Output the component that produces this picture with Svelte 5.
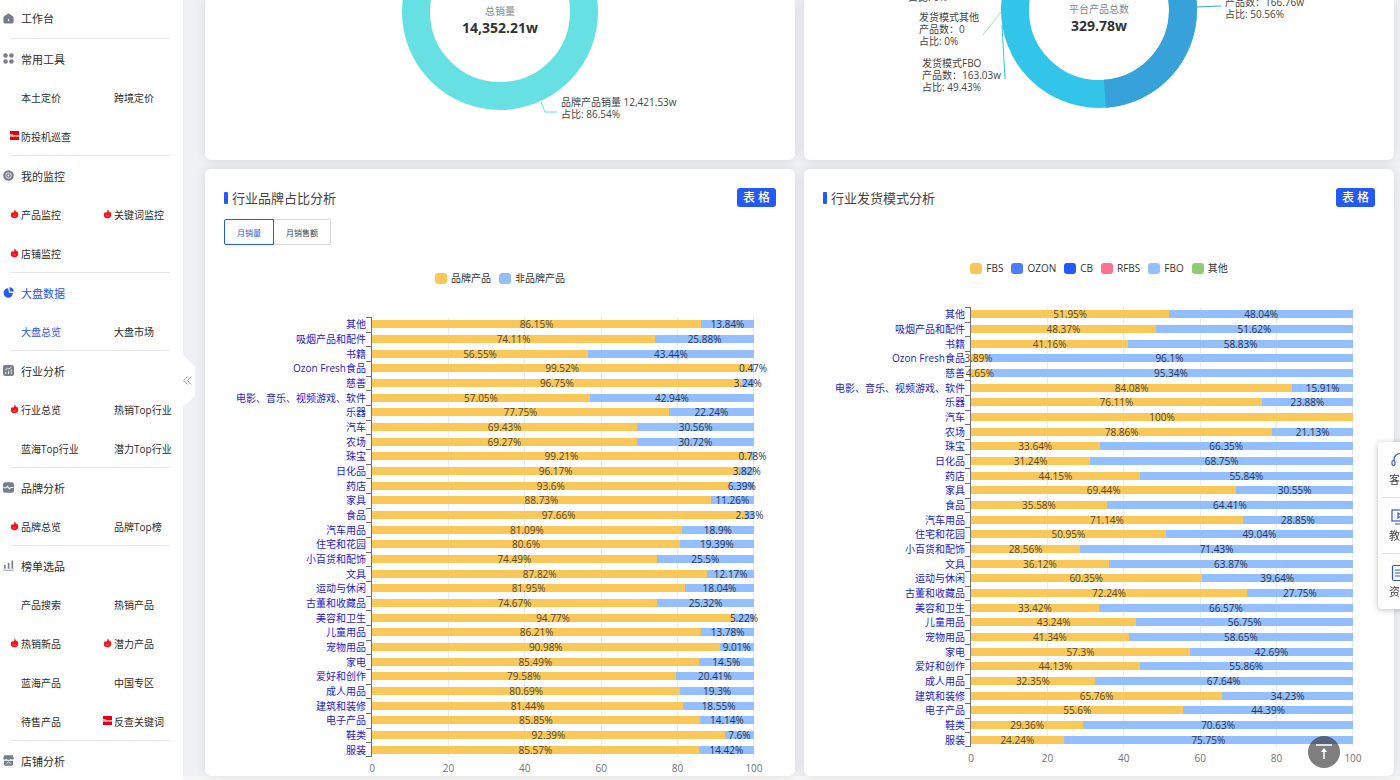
<script lang="ts">
  const menu = [
    {
      title: "常用工具",
      icon: "grid",
      items: [{ name: "本土定价" }, { name: "跨境定价" }, { name: "防投机巡查", tag: "new" }],
    },
    {
      title: "我的监控",
      icon: "target",
      items: [
        { name: "产品监控", tag: "hot" },
        { name: "关键词监控", tag: "hot" },
        { name: "店铺监控", tag: "hot" },
      ],
    },
    {
      title: "大盘数据",
      icon: "pie",
      active: true,
      items: [{ name: "大盘总览", active: true }, { name: "大盘市场" }],
    },
    {
      title: "行业分析",
      icon: "trend",
      items: [
        { name: "行业总览", tag: "hot" },
        { name: "热销Top行业" },
        { name: "蓝海Top行业" },
        { name: "潜力Top行业" },
      ],
    },
    {
      title: "品牌分析",
      icon: "pulse",
      items: [{ name: "品牌总览", tag: "hot" }, { name: "品牌Top榜" }],
    },
    {
      title: "榜单选品",
      icon: "bars",
      items: [
        { name: "产品搜索" },
        { name: "热销产品" },
        { name: "热销新品", tag: "hot" },
        { name: "潜力产品", tag: "hot" },
        { name: "蓝海产品" },
        { name: "中国专区" },
        { name: "待售产品" },
        { name: "反查关键词", tag: "new" },
      ],
    },
    { title: "店铺分析", icon: "shop", items: [] },
  ];

  const categories = [
    "其他", "吸烟产品和配件", "书籍", "Ozon Fresh食品", "慈善",
    "电影、音乐、视频游戏、软件", "乐器", "汽车", "农场", "珠宝",
    "日化品", "药店", "家具", "食品", "汽车用品",
    "住宅和花园", "小百货和配饰", "文具", "运动与休闲", "古董和收藏品",
    "美容和卫生", "儿童用品", "宠物用品", "家电", "爱好和创作",
    "成人用品", "建筑和装修", "电子产品", "鞋类", "服装",
  ];

  const brand = [
    [86.15, 13.84], [74.11, 25.88], [56.55, 43.44], [99.52, 0.47], [96.75, 3.24],
    [57.05, 42.94], [77.75, 22.24], [69.43, 30.56], [69.27, 30.72], [99.21, 0.78],
    [96.17, 3.82], [93.6, 6.39], [88.73, 11.26], [97.66, 2.33], [81.09, 18.9],
    [80.6, 19.39], [74.49, 25.5], [87.82, 12.17], [81.95, 18.04], [74.67, 25.32],
    [94.77, 5.22], [86.21, 13.78], [90.98, 9.01], [85.49, 14.5], [79.58, 20.41],
    [80.69, 19.3], [81.44, 18.55], [85.85, 14.14], [92.39, 7.6], [85.57, 14.42],
  ];

  const delivery = [
    [51.95, 48.04], [48.37, 51.62], [41.16, 58.83], [3.89, 96.1], [4.65, 95.34],
    [84.08, 15.91], [76.11, 23.88], [100], [78.86, 21.13], [33.64, 66.35],
    [31.24, 68.75], [44.15, 55.84], [69.44, 30.55], [35.58, 64.41], [71.14, 28.85],
    [50.95, 49.04], [28.56, 71.43], [36.12, 63.87], [60.35, 39.64], [72.24, 27.75],
    [33.42, 66.57], [43.24, 56.75], [41.34, 58.65], [57.3, 42.69], [44.13, 55.86],
    [32.35, 67.64], [65.76, 34.23], [55.6, 44.39], [29.36, 70.63], [24.24, 75.75],
  ];

  const brandLegend = [
    { name: "品牌产品", color: "#fac858" },
    { name: "非品牌产品", color: "#93beff" },
  ];

  const deliveryLegend = [
    { name: "FBS", color: "#fac858" },
    { name: "OZON", color: "#4e7bff" },
    { name: "CB", color: "#2459f5" },
    { name: "RFBS", color: "#fc7293" },
    { name: "FBO", color: "#93beff" },
    { name: "其他", color: "#91cc75" },
  ];

  const ticks = [0, 20, 40, 60, 80, 100];
  const tabs = ["月销量", "月销售额"];
  let tab = $state("月销量");
</script>

{#snippet menuIcon(name)}
  <svg class="icon" viewBox="0 0 12 12" aria-hidden="true">
    {#if name === "home"}
      <path d="M6 0.4 10.8 3.6Q11.6 4.2 11.6 5.2V9.6Q11.6 11.4 9.8 11.4H2.2Q0.4 11.4 0.4 9.6V5.2Q0.4 4.2 1.2 3.6Z" />
      <path d="M6 6.4V8.8" stroke="#fff" />
    {:else if name === "grid"}
      <circle cx="2.8" cy="2.8" r="2.5" />
      <circle cx="9.2" cy="2.8" r="2.5" />
      <circle cx="2.8" cy="9.2" r="2.5" />
      <circle cx="9.2" cy="9.2" r="2.5" />
    {:else if name === "target"}
      <circle cx="6" cy="6" r="5.8" />
      <circle cx="6" cy="6" r="3" fill="none" stroke="#fff" stroke-width="0.9" />
      <circle cx="6" cy="6" r="1" fill="#fff" />
    {:else if name === "pie"}
      <path d="M5.6 1.4A5.1 5.1 0 1 0 10.8 6.8L6.6 6.4Z" />
      <path d="M7 0.2A5 5 0 0 1 11.8 4.8L7.6 5Z" />
    {:else if name === "trend"}
      <rect width="12" height="12" rx="2.4" />
      <path d="M3 10V7.6M6 10V6.2M9 10V4.8M2.4 5.4 5 3.6 6.4 4.4 9.4 2" fill="none" stroke="#fff" stroke-width="0.9" />
    {:else if name === "pulse"}
      <rect y="0.4" width="12" height="11.2" rx="2.4" />
      <path d="M0.4 6.4H3.4L5 4.8 7 7.6 8.6 6H11.6" fill="none" stroke="#fff" stroke-width="1.1" />
    {:else if name === "bars"}
      <path d="M1.2 5.4H3V9.6H1.2ZM5.2 3H7V9.6H5.2ZM9.2 0.6H11V9.6H9.2ZM0.2 10.6H11.8V11.5H0.2Z" />
    {:else}
      <path d="M1.6 0.4H10.4L11.8 3.4Q11.8 5.2 10.2 5.2 9 5.2 8.6 4.2 8 5.4 6 5.4 4 5.4 3.4 4.2 3 5.2 1.8 5.2 0.2 5.2 0.2 3.4Z" />
      <path d="M1 6.2H11V10Q11 11.6 9.4 11.6H2.6Q1 11.6 1 10Z" />
      <path d="M3.6 9.6 6 7.6 8.4 9.6" fill="none" stroke="#fff" stroke-width="0.9" />
    {/if}
  </svg>
{/snippet}

{#snippet barChart(rows)}
  <div class="chart">
    <div class="rows">
      <div class="grid-lines">
        {#each ticks as t}
          <i></i>
        {/each}
      </div>
      {#each rows as row, i}
        <div class="row">
          <span class="category">{categories[i]}</span>
          <span class="tick"></span>
          <div class="track">
            {#each row as value}
              <div class="bar" style="width: {value}%"><span>{value}%</span></div>
            {/each}
          </div>
        </div>
      {/each}
    </div>
    <div class="axis">
      {#each ticks as t}
        <span>{t}</span>
      {/each}
    </div>
  </div>
{/snippet}

{#snippet legend(entries)}
  <ul class="legend">
    {#each entries as entry}
      <li><i style="background: {entry.color}"></i>{entry.name}</li>
    {/each}
  </ul>
{/snippet}

<div class="page">
  <nav class="sidebar">
    <a class="heading home" href="#home">{@render menuIcon("home")}工作台</a>
    {#each menu as group}
      <section class="group">
        <a class="heading" class:active={group.active} href="#group">
          {@render menuIcon(group.icon)}{group.title}
        </a>
        <div class="items">
          {#each group.items as item}
            <a class="item" class:active={item.active} href="#item">
              <span class="tag">
                {#if item.tag === "hot"}
                  <svg width="9" height="10" viewBox="0 0 9 10" aria-hidden="true">
                    <path d="M4.6 0.4Q6.2 1.6 6 3.2 6.8 3 7 2.2 8.6 4 8.2 6.4 7.6 9.2 4.4 9.2 1.2 9 0.8 6.4 0.6 4.4 2.2 2.8 2.4 3.8 3 3.8 4.6 2.8 4.6 0.4Z" fill="#f5141c" />
                    <path d="M3 6.6Q4.4 7.6 6 6.6" fill="none" stroke="#ff9a9a" stroke-width="0.6" />
                  </svg>
                {:else if item.tag === "new"}
                  <b class="new">New</b>
                {/if}
              </span>{item.name}
            </a>
          {/each}
        </div>
      </section>
    {/each}
    <button class="collapse" aria-label="收起菜单">
      <svg width="9" height="9" viewBox="0 0 9 9" aria-hidden="true">
        <path d="M4.5 0.5 0.8 4.5 4.5 8.5M8.2 0.5 4.5 4.5 8.2 8.5" fill="none" stroke="#777" stroke-width="0.8" />
      </svg>
    </button>
  </nav>

  <main>
    <section class="card donut">
      <svg width="590" height="160" viewBox="0 0 590 160">
        <circle cx="295" cy="12" r="84" fill="none" stroke="#67e0e3" stroke-width="28" />
        <text class="caption" x="295" y="15">总销量</text>
        <text class="total" x="295" y="33">14,352.21w</text>
        <path d="M336 102 340 112H352" fill="none" stroke="#67e0e3" />
        <text x="356" y="106">品牌产品销量 12,421.53w</text>
        <text x="356" y="118">占比: 86.54%</text>
      </svg>
    </section>

    <section class="card donut">
      <svg width="590" height="160" viewBox="0 0 590 160">
        <circle cx="295" cy="10" r="84" fill="none" stroke="#32c5e9" stroke-width="28" />
        <path d="M295-74A84 84 0 0 1 300.9 93.79" fill="none" stroke="#37a2da" stroke-width="28" />
        <text class="caption" x="295" y="13">平台产品总数</text>
        <text class="total" x="295" y="31">329.78w</text>
        <path d="M392 7 417 6" stroke="#37a2da" />
        <text x="421" y="6">产品数：166.76w</text>
        <text x="421" y="18">占比: 50.56%</text>
        <path d="M197 12 179 35" stroke="#9fe6b8" />
        <text x="104" y="1">占比: 0%</text>
        <text x="115" y="21">发货模式其他</text>
        <text x="115" y="33">产品数：0</text>
        <text x="115" y="45">占比: 0%</text>
        <path d="M198 25 201 79" stroke="#32c5e9" />
        <text x="118" y="67">发货模式FBO</text>
        <text x="118" y="79">产品数：163.03w</text>
        <text x="118" y="91">占比: 49.43%</text>
      </svg>
    </section>

    <section class="card">
      <header>
        <h2>行业品牌占比分析</h2>
        <button class="table-btn">表 格</button>
      </header>
      <div class="tabs">
        {#each tabs as name}
          <button class:selected={tab === name} onclick={() => (tab = name)}>{name}</button>
        {/each}
      </div>
      {@render legend(brandLegend)}
      {@render barChart(brand)}
    </section>

    <section class="card no-tabs">
      <header>
        <h2>行业发货模式分析</h2>
        <button class="table-btn">表 格</button>
      </header>
      {@render legend(deliveryLegend)}
      {@render barChart(delivery)}
    </section>
  </main>

  <aside class="float">
    <a href="#service">
      <svg width="18" height="18" viewBox="0 0 18 18" aria-hidden="true">
        <path d="M3 9V7.5A6 6 0 0 1 15 7.5V9M15 12Q14.6 15.6 10 15.8" />
        <rect x="1" y="8.5" width="3" height="5" rx="1.5" />
        <rect x="14" y="8.5" width="3" height="5" rx="1.5" />
      </svg>
      客服
    </a>
    <a href="#course">
      <svg width="18" height="18" viewBox="0 0 18 18" aria-hidden="true">
        <rect x="1" y="2" width="16" height="11" />
        <path d="M7 5V10L11 7.5ZM4 16H14" />
      </svg>
      教程
    </a>
    <a href="#docs">
      <svg width="18" height="18" viewBox="0 0 18 18" aria-hidden="true">
        <rect x="1.5" y="1.5" width="15" height="15" rx="1.5" />
        <path d="M4 6H14M4 9H14M4 12H14" />
      </svg>
      资料
    </a>
  </aside>

  <button class="to-top" aria-label="回到顶部">
    <svg width="16" height="16" viewBox="0 0 16 16" aria-hidden="true">
      <path d="M0 1H16M8 15V6" fill="none" stroke="#fff" stroke-width="1.5" />
      <path d="M8 4 11 8H5Z" fill="#fff" />
    </svg>
  </button>
</div>

<style>
  :global(body) {
    margin: 0;
    background: #f7f7f7;
  }
  .page {
    display: flex;
    align-items: flex-start;
    height: 100vh;
    overflow: hidden;
    font-family: "Open Sans", "Noto Sans CJK SC", sans-serif;
    font-size: 10px;
    color: #2c2c2c;
  }
  button {
    font-family: inherit;
    cursor: pointer;
  }
  a {
    color: inherit;
    text-decoration: none;
  }

  .sidebar {
    position: relative;
    flex: 0 0 183px;
    min-width: 0;
    height: 100vh;
    background: #fff;
  }
  .heading {
    display: flex;
    align-items: center;
    gap: 7px;
    height: 39px;
    margin-left: -7px;
    font-size: 11px;
    white-space: nowrap;
  }
  .home {
    height: 36px;
    margin: 0 0 2px 3px;
  }
  .icon {
    width: 11px;
    height: 11px;
    fill: #777d8d;
  }
  .active {
    color: #2b55e6;
  }
  .active .icon {
    fill: #2459f5;
  }
  .group {
    margin: 0 13px 0 10px;
    border-top: 1px solid #e4e6ea;
  }
  .items {
    display: grid;
    grid-template-columns: 93px minmax(0, 1fr);
    grid-auto-rows: 39px;
    margin-bottom: -1px;
  }
  .item {
    display: flex;
    align-items: center;
    white-space: nowrap;
  }
  .tag {
    flex: 0 0 11px;
    height: 12px;
  }
  .tag svg,
  .new {
    display: block;
  }
  .new {
    width: 9px;
    height: 9px;
    background: #e60012;
    color: #fff;
    font-size: 4px;
    line-height: 9px;
    text-align: center;
  }
  .collapse {
    position: absolute;
    top: 355px;
    left: 183px;
    z-index: 1;
    width: 12px;
    height: 52px;
    padding: 0 0 2px;
    border: 0;
    background: #fff;
    text-align: left;
    clip-path: polygon(0 0, 100% 22%, 100% 78%, 0 100%);
  }

  main {
    flex: 1;
    display: grid;
    grid-template-columns: 1fr 1fr;
    gap: 9px;
    padding: 0 6px 0 22px;
    background: #eff1f5;
  }
  .card {
    min-width: 0;
    background: #fff;
    border-radius: 6px;
    box-shadow: 0 0 12px rgba(0, 0, 0, 0.1);
    padding: 19px 19px 0;
  }
  .donut {
    display: flex;
    justify-content: center;
    padding: 0;
    border-radius: 0 0 6px 6px;
  }
  .donut text {
    fill: #444;
    font-size: 10px;
  }
  .donut .caption {
    fill: #888;
    text-anchor: middle;
  }
  .donut .total {
    fill: #333;
    font-size: 14px;
    font-weight: 700;
    text-anchor: middle;
  }

  header {
    display: flex;
    justify-content: space-between;
    align-items: center;
    height: 19px;
  }
  h2 {
    display: flex;
    align-items: center;
    gap: 4px;
    margin: 0;
    font-size: 13px;
    font-weight: 400;
    line-height: 18px;
    color: #444;
  }
  h2::before {
    content: "";
    width: 4px;
    height: 12px;
    border-radius: 1px;
    background: #2459f5;
  }
  .table-btn {
    width: 39px;
    height: 19px;
    padding: 0;
    border: 0;
    border-radius: 3px;
    background: #2459f5;
    color: #fff;
    font-size: 12px;
    font-weight: 500;
    line-height: 19px;
  }
  .tabs {
    display: flex;
    margin-top: 12px;
  }
  .tabs button {
    height: 26px;
    padding: 0 12px;
    border: 1px solid #d3d5da;
    border-left: 0;
    border-radius: 0 2px 2px 0;
    background: #fff;
    color: #444;
    font-size: 8px;
  }
  .tabs .selected {
    border: 1px solid #2459f5;
    border-radius: 2px 0 0 2px;
    color: #2459f5;
  }

  .legend {
    display: flex;
    justify-content: center;
    gap: 8px;
    margin: 27px 0 33px;
    padding: 0;
    list-style: none;
    color: #333;
  }
  .no-tabs .legend {
    margin-top: 55px;
  }
  .legend li {
    display: flex;
    align-items: center;
    gap: 4px;
    line-height: 12px;
  }
  .legend i {
    width: 12px;
    height: 11px;
    border-radius: 3px;
  }

  .chart {
    margin-right: 22px;
  }
  .rows {
    position: relative;
    display: grid;
    grid-template-rows: repeat(30, 1fr);
    height: 440px;
  }
  .grid-lines {
    position: absolute;
    inset: 0 0 0 147px;
    display: flex;
    justify-content: space-between;
    border-left: 1px solid #6e7079;
  }
  .grid-lines i {
    width: 1px;
    background: #e6eaf2;
  }
  .grid-lines i:first-child {
    background: none;
  }
  .row {
    position: relative;
    display: flex;
    align-items: center;
    min-height: 0;
    line-height: 12px;
  }
  .category {
    flex: 0 0 142px;
    text-align: right;
    white-space: nowrap;
    color: #2419d2;
  }
  .tick {
    flex: 0 0 6px;
    align-self: stretch;
    border-top: 1px solid #6e7079;
    box-sizing: border-box;
  }
  .rows::after {
    content: "";
    position: absolute;
    bottom: 0;
    left: 142px;
    width: 6px;
    height: 1px;
    background: #6e7079;
  }
  .track {
    flex: 1;
    display: flex;
    height: 8px;
  }
  .bar {
    display: flex;
    align-items: center;
    justify-content: center;
    background: #fac858;
    color: #54492f;
  }
  .bar + .bar {
    background: #93beff;
    color: #263550;
  }
  .bar span {
    position: relative;
    z-index: 1;
  }
  .axis {
    display: flex;
    justify-content: space-between;
    margin-left: 148px;
    padding-top: 3px;
    line-height: 16px;
    color: #6e7079;
  }
  .axis span {
    display: flex;
    justify-content: center;
    width: 0;
  }

  .float {
    position: fixed;
    top: 442px;
    right: -22px;
    z-index: 2;
    width: 44px;
    border-radius: 4px;
    background: #fff;
    box-shadow: 0 1px 6px rgba(0, 0, 0, 0.25);
    color: #444;
    font-size: 11px;
  }
  .float a {
    display: flex;
    flex-direction: column;
    align-items: center;
    justify-content: center;
    gap: 2px;
    height: 55px;
    margin: 0 4px;
    line-height: 16px;
  }
  .float a + a {
    border-top: 1px solid #ddd;
  }
  .float svg {
    fill: none;
    stroke: #2f55e0;
    stroke-width: 1.2;
  }
  .to-top {
    position: fixed;
    right: 60px;
    bottom: 12px;
    z-index: 2;
    display: flex;
    align-items: center;
    justify-content: center;
    width: 32px;
    height: 32px;
    padding: 0;
    border: 0;
    border-radius: 50%;
    background: rgba(40, 40, 40, 0.6);
  }
</style>
